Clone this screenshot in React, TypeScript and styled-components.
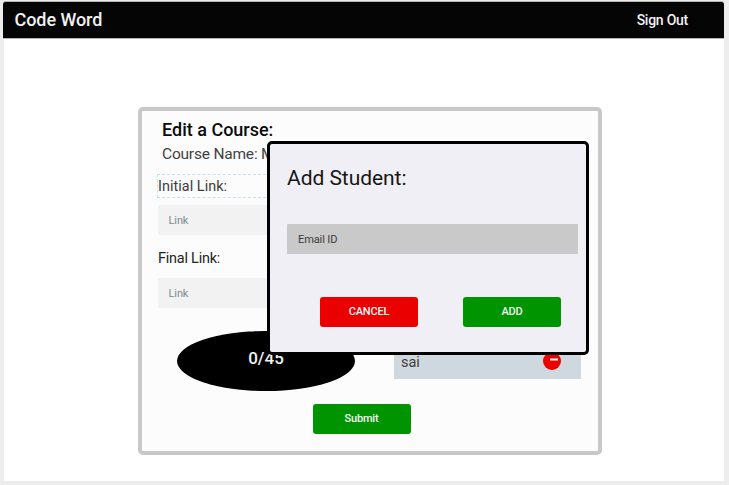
import React from 'react';
import styled, { createGlobalStyle } from 'styled-components';

const GlobalStyle = createGlobalStyle`
  * { box-sizing: border-box; }
  body {
    margin: 0;
    background: #ededed;
    font-family: Roboto, "Liberation Sans", sans-serif;
    overflow: hidden;
  }
  h1, h2, h3, p { margin: 0; }
`;

const Page = styled.div`
  width: 729px;
  height: 485px;
  padding: 1px 5px 4px 4px;
`;

const Frame = styled.div`
  height: 480px;
  background: #fff;
  border-radius: 3px 3px 0 0;
`;

const Header = styled.header`
  display: flex;
  align-items: center;
  justify-content: space-between;
  height: 38px;
  margin-left: -1px;
  padding: 0 36px 0 11.5px;
  background: #050505;
  border: solid #b5b5b5;
  border-width: 1px 0;
  border-radius: 3px 3px 0 0;
  color: #f2f2f2;
`;

const Brand = styled.h1`
  font-size: 18px;
  font-weight: 500;
  line-height: 36px;
  letter-spacing: -0.06px;
`;

const SignOut = styled.a`
  font-size: 14px;
  font-weight: 500;
  line-height: 36px;
  letter-spacing: -0.25px;
`;

const Card = styled.main`
  position: relative;
  width: 463.5px;
  height: 348px;
  margin: 68px 0 0 134px;
  padding: 8px 16px 0 15.5px;
  background: #fcfcfc;
  border: 4px solid #c8c8c8;
  border-radius: 5px;
`;

const Title = styled.h2`
  margin-left: 4.5px;
  font-size: 18px;
  font-weight: 500;
  line-height: 22px;
  color: #0b0b0b;
`;

const CourseName = styled.p`
  margin: 2px 0 0 4.5px;
  padding-bottom: 1px;
  font-size: 15.5px;
  line-height: 22px;
  letter-spacing: -0.2px;
  color: #424242;
`;

const FieldLabel = styled.label<{ $outlined?: boolean }>`
  display: block;
  width: 200px;
  height: 24px;
  margin-left: -0.5px;
  border: 1px dashed ${p => (p.$outlined ? '#c5e1f6' : 'transparent')};
  font-size: 14.4px;
  line-height: ${p => (p.$outlined ? '24px' : '22px')};
  letter-spacing: ${p => (p.$outlined ? '0.05px' : '-0.2px')};
  color: ${p => (p.$outlined ? '#3d3d3d' : '#222')};
`;

const Field = styled.div<{ $tone: 'light' | 'dark' }>`
  height: 30px;
  padding-left: 11px;
  border-radius: 1px;
  font-size: 11px;
  line-height: 31px;
  letter-spacing: -0.1px;
  background: ${p => (p.$tone === 'light' ? '#f2f2f2' : '#c9c9c9')};
  color: ${p => (p.$tone === 'light' ? '#7b8b8f' : '#3a3a3a')};
`;

const LinkGroup = styled.section`
  width: 200px;
  margin-top: 8px;
  & + & { margin-top: 12px; }
  ${Field} { margin-top: 7px; }
`;

const Roster = styled.section`
  display: flex;
  justify-content: space-between;
  margin-top: 22.5px;
  padding: 0 1px 0 19.5px;
`;

const Counter = styled.div`
  width: 178px;
  height: 60px;
  border-radius: 50%;
  background: #000;
  color: #f1f1f1;
  font-size: 17px;
  font-weight: 500;
  line-height: 55px;
  text-align: center;
`;

const Student = styled.div`
  display: flex;
  align-items: center;
  justify-content: space-between;
  width: 187px;
  height: 36px;
  margin-top: 12.5px;
  padding: 2px 20px 0 7.5px;
  background: #cfd8de;
  color: #3c3c3c;
  font-size: 14.5px;
`;

const Remove = styled.svg`
  display: block;
  width: 18px;
  height: 18px;
  margin-top: -2px;
`;

const Button = styled.button<{ $color: string }>`
  width: 98px;
  height: 30px;
  padding: 0;
  border: 0;
  border-radius: 3px;
  background: ${p => p.$color};
  color: #f4f4f4;
  font: 500 11px/30px Roboto, sans-serif;
  letter-spacing: -0.2px;
`;

const SubmitRow = styled.div`
  display: flex;
  margin: 13.5px 0 0 155px;
`;

const Dialog = styled.section`
  position: absolute;
  top: 30px;
  left: 125px;
  width: 322px;
  height: 214px;
  padding: 22px 8px 0 17px;
  background: #f0eff5;
  border: 3.5px solid #000;
  border-radius: 5px;
`;

const DialogTitle = styled.h3`
  margin-bottom: 33px;
  font-size: 21px;
  font-weight: 400;
  line-height: 25px;
  letter-spacing: -0.05px;
  color: #161616;
`;

const Actions = styled.div`
  display: flex;
  justify-content: space-between;
  margin-top: 43px;
  padding: 0 17px 0 33px;
`;

export default function App() {
  return (
    <Page>
      <GlobalStyle />
      <Frame>
        <Header>
          <Brand>Code Word</Brand>
          <SignOut>Sign Out</SignOut>
        </Header>
        <Card>
          <Title>Edit a Course:</Title>
          <CourseName>Course Name: M</CourseName>
          <LinkGroup>
            <FieldLabel $outlined>Initial Link:</FieldLabel>
            <Field $tone="light">Link</Field>
          </LinkGroup>
          <LinkGroup>
            <FieldLabel>Final Link:</FieldLabel>
            <Field $tone="light">Link</Field>
          </LinkGroup>
          <Roster>
            <Counter>0/45</Counter>
            <Student>
              <span>sai</span>
              <Remove viewBox="0 0 18 18">
                <circle cx="9" cy="9" r="9" fill="#eb0000" />
                <rect x="7" y="6.5" width="8" height="2" fill="#fff" />
              </Remove>
            </Student>
          </Roster>
          <SubmitRow>
            <Button $color="#009400">Submit</Button>
          </SubmitRow>
          <Dialog>
            <DialogTitle>Add Student:</DialogTitle>
            <Field $tone="dark">Email ID</Field>
            <Actions>
              <Button $color="#eb0000">CANCEL</Button>
              <Button $color="#009400">ADD</Button>
            </Actions>
          </Dialog>
        </Card>
      </Frame>
    </Page>
  );
}
